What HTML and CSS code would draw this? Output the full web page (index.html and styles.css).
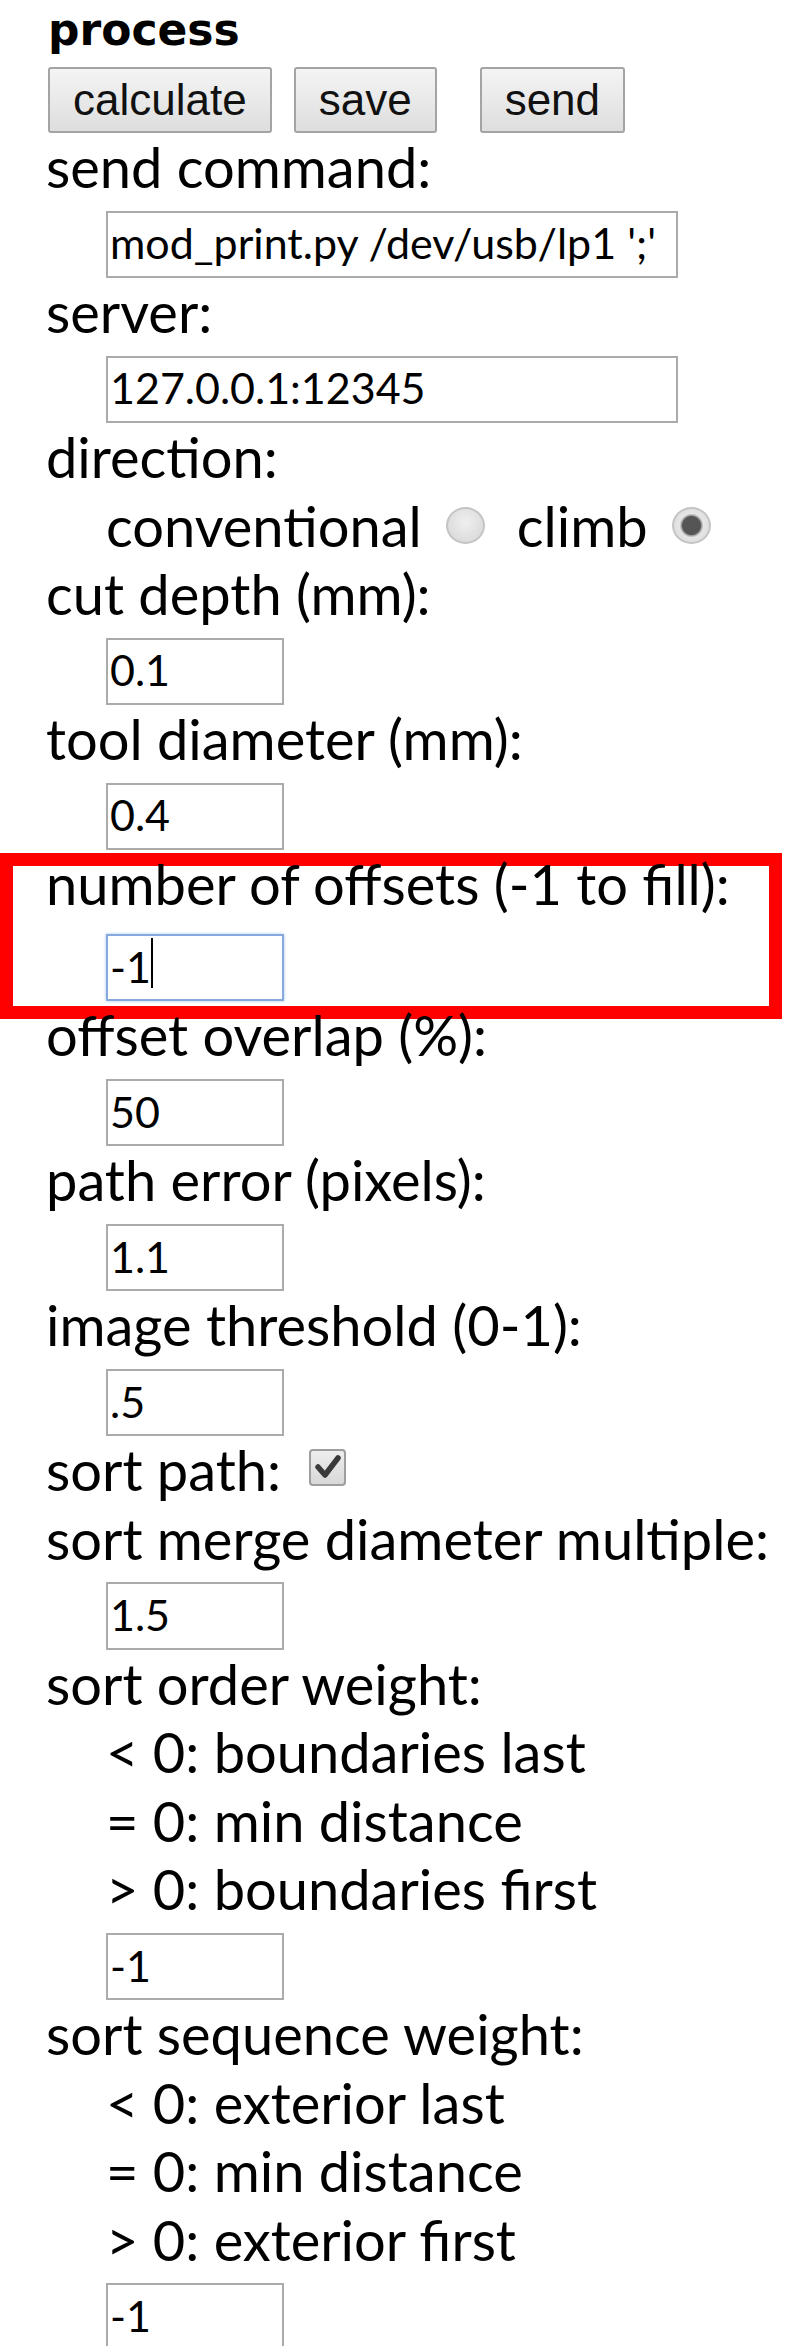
FILE: index.html
```html
<!DOCTYPE html>
<html>
<head>
<link rel="stylesheet" href="styles.css">
</head>
<body>

<div class="panel">
    <div class="title">process</div>
    <div class="buttons">
        <button class="btn">calculate</button>
        <button class="btn">save</button>
        <button class="btn btn-far">send</button>
    </div>

    <div class="label">send command:</div>
    <div class="field"><input class="text wide" type="text" value="mod_print.py /dev/usb/lp1 ';'"></div>

    <div class="label">server:</div>
    <div class="field"><input class="text wide" type="text" value="127.0.0.1:12345"></div>

    <div class="label">direction:</div>
    <div class="label sub">conventional<span class="radio"></span>climb<span class="radio on"></span></div>

    <div class="label">cut depth (mm):</div>
    <div class="field"><input class="text" type="text" value="0.1"></div>

    <div class="label">tool diameter (mm):</div>
    <div class="field"><input class="text" type="text" value="0.4"></div>

    <!-- marked area -->
    <div class="highlight">
        <div class="label">number of offsets (-1 to fill):</div>
        <div class="field">
            <span class="focus-wrap">
                <input class="text focused" type="text" value="-1">
                <span class="caret"></span>
            </span>
        </div>
    </div>

    <div class="label">offset overlap (%):</div>
    <div class="field"><input class="text" type="text" value="50"></div>

    <div class="label">path error (pixels):</div>
    <div class="field"><input class="text" type="text" value="1.1"></div>

    <div class="label">image threshold (0-1):</div>
    <div class="field"><input class="text" type="text" value=".5"></div>

    <div class="label">sort path:<span class="check"><svg viewBox="0 0 33 33" width="33" height="33"><path d="M7 16 L14 24 L27 7" fill="none" stroke="#3a3a3a" stroke-width="5.5" stroke-linecap="round" stroke-linejoin="round"/></svg></span></div>

    <div class="label">sort merge diameter multiple:</div>
    <div class="field"><input class="text" type="text" value="1.5"></div>

    <div class="label">sort order weight:</div>
    <div class="label sub">&lt; 0: boundaries last</div>
    <div class="label sub">= 0: min distance</div>
    <div class="label sub">&gt; 0: boundaries first</div>
    <div class="field"><input class="text" type="text" value="-1"></div>

    <div class="label">sort sequence weight:</div>
    <div class="label sub">&lt; 0: exterior last</div>
    <div class="label sub">= 0: min distance</div>
    <div class="label sub">&gt; 0: exterior first</div>
    <div class="field"><input class="text" type="text" value="-1"></div>
</div>

</body>
</html>
```
FILE: styles.css
```css
body {
    margin: 0;
    background: #fff;
    color: #000;
    font-family: Lato, "Liberation Sans", sans-serif;
    font-size: 56px;
}

.panel {
    padding-left: 46px;
}

.title {
    padding-left: 2px;
    font: bold 44px "DejaVu Sans", sans-serif;
    line-height: 60px;
}

.buttons {
    display: flex;
    height: 66px;
    margin-top: 7px;
}

.btn {
    height: 66px;
    margin: 0 20px 0 2px;
    padding: 0 23px;
    border: 2px solid #a4a4a4;
    border-radius: 3px;
    background: linear-gradient(#f4f4f4, #dedede);
    color: #111;
    font: 44px "Liberation Sans", Arial, sans-serif;
}

.btn-far {
    margin-left: 23px;
}

.label {
    line-height: 68.5px;
    white-space: nowrap;
}

.sub {
    padding-left: 60px;
}

.field {
    display: flex;
    margin-top: 9px;
    padding-left: 60px;
}

.text {
    box-sizing: border-box;
    width: 178px;
    height: 67.5px;
    margin: 0;
    padding: 0 2px 3px;
    border: 2px solid #ababab;
    border-radius: 0;
    background: #fff;
    color: #000;
    font: 43px Lato, "Liberation Sans", sans-serif;
    outline: none;
}

.text.wide {
    width: 572px;
}

/* input that has the cursor */
.focus-wrap {
    position: relative;
    display: block;
}

.text.focused {
    border-color: #86a8dc;
    box-shadow: 0 0 3px #a8c4ee;
}

.caret {
    position: absolute;
    left: 45px;
    top: 10px;
    width: 2px;
    height: 50px;
    background: #000;
}

.radio {
    display: inline-block;
    box-sizing: border-box;
    width: 39px;
    height: 37px;
    margin: 0 32px 0 24px;
    border: 2px solid #c4c4c4;
    border-radius: 50%;
    background: radial-gradient(circle at 50% 40%, #efefef, #d5d5d5);
    vertical-align: 3px;
}

.radio.on {
    background: radial-gradient(circle, #555 0 9px, #9a9a9a 10px, #e6e6e6 12px, #d6d6d6);
}

.check {
    display: inline-block;
    box-sizing: border-box;
    width: 37px;
    height: 37px;
    margin-left: 28px;
    border: 2px solid #9e9e9e;
    border-radius: 4px;
    background: linear-gradient(#eeeeee, #d8d8d8);
    vertical-align: 5px;
}

.check svg {
    display: block;
}

.highlight {
    box-sizing: border-box;
    width: 782px;
    margin: 3px 0 -18px -46px;
    padding: 0 0 5px 33px;
    border: 13px solid #f00;
}

.highlight > .label {
    margin-top: -16px;
}
```
